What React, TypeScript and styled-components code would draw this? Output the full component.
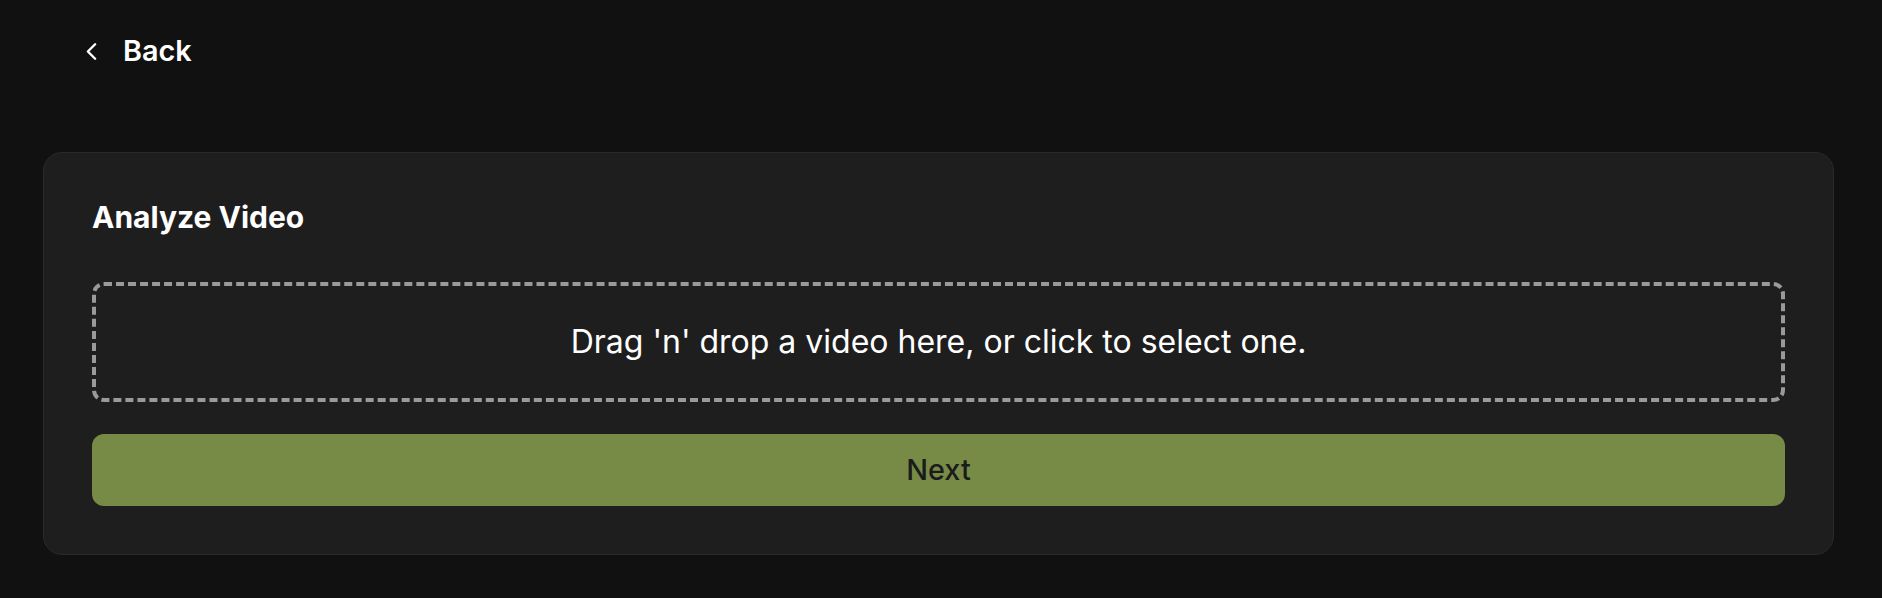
import React from "react";
import styled, { createGlobalStyle } from "styled-components";
import { ChevronLeft } from "lucide-react";

const GlobalStyle = createGlobalStyle`
  html, body { margin: 0; padding: 0; background: #111111; }
  body { font-family: Inter, "Noto Sans", "Liberation Sans", sans-serif; -webkit-font-smoothing: antialiased; }
  * { box-sizing: border-box; }
`;

const Page = styled.div`
  min-height: 598px;
  background: #111111;
  padding: 0 48px 43px 43px;
  display: flex;
  flex-direction: column;
`;

const Header = styled.header`
  padding-top: 33px;
  padding-left: 34px;
  display: flex;
`;

const BackButton = styled.button`
  display: flex;
  align-items: center;
  gap: 17px;
  height: 36px;
  padding: 0;
  border: none;
  background: transparent;
  color: #ffffff;
  font-family: inherit;
  font-size: 28.8px;
  line-height: 34.56px;
  font-weight: 600;
  cursor: pointer;
`;

const Card = styled.section`
  margin-top: 83px;
  background: #1e1e1e;
  border: 1px solid #2a2a2a;
  border-radius: 19px;
  padding: 48px;
  display: flex;
  flex-direction: column;
`;

const Title = styled.h2`
  margin: 0 0 49px;
  color: #ffffff;
  font-size: 30px;
  line-height: 32px;
  font-weight: 700;
`;

const DropZone = styled.div`
  height: 120px;
  border: 4px dashed #9a9a9a;
  border-radius: 12px;
  display: flex;
  align-items: center;
  justify-content: center;
  color: #ffffff;
  font-size: 32px;
  line-height: 38px;
  font-weight: 400;
  cursor: pointer;
`;

const NextButton = styled.button`
  margin-top: 32px;
  height: 72px;
  width: 100%;
  border: none;
  border-radius: 12px;
  background: #778b47;
  color: #1b1b1b;
  font-family: inherit;
  font-size: 28.8px;
  line-height: 34.56px;
  font-weight: 500;
  cursor: pointer;
`;

export default function App() {
  return (
    <>
      <GlobalStyle />
      <Page>
        <Header>
          <BackButton>
            <ChevronLeft size={29} strokeWidth={2} />
            Back
          </BackButton>
        </Header>
        <Card>
          <Title>Analyze Video</Title>
          <DropZone>Drag 'n' drop a video here, or click to select one.</DropZone>
          <NextButton>Next</NextButton>
        </Card>
      </Page>
    </>
  );
}
